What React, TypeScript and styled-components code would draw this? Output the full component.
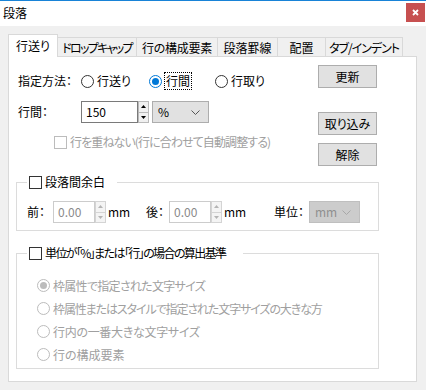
import React from 'react';
import styled, { createGlobalStyle } from 'styled-components';

const GlobalStyle = createGlobalStyle`
  html, body {
    margin: 0;
    padding: 0;
    background: #f0f0f0;
  }
  body {
    font-family: "Noto Sans CJK JP", "Noto Sans", sans-serif;
    font-size: 12px;
    line-height: 16px;
    color: #000;
    font-feature-settings: "palt";
  }
  * { box-sizing: border-box; }
`;

const Window = styled.div`
  width: 426px;
  height: 390px;
  background: #f0f0f0;
  overflow: hidden;
  display: flex;
  flex-direction: column;
`;

const TitleBar = styled.div`
  height: 26px;
  border-top: 1px solid #1883d7;
  background: #fff;
  display: flex;
  justify-content: space-between;
  padding-left: 3px;
  padding-right: 1px;
`;

const Title = styled.span`
  line-height: 24px;
  font-size: 12px;
`;

const CloseButton = styled.div`
  width: 19px;
  height: 19px;
  margin-top: 2px;
  background: #c75050;
  display: flex;
  align-items: center;
  justify-content: center;
`;

const Body = styled.div`
  padding: 8px 0 0 8px;
`;

const TabStrip = styled.div`
  display: flex;
  align-items: flex-end;
  height: 23px;
  margin-bottom: -1px;
  position: relative;
  z-index: 1;
`;

const Tab = styled.div<{ $active?: boolean; $w: number; $ls: number }>`
  width: ${p => p.$w}px;
  height: ${p => (p.$active ? 23 : 19)}px;
  margin-bottom: ${p => (p.$active ? 0 : 1)}px;
  background: ${p => (p.$active ? '#fff' : '#f0f0f0')};
  border: 1px solid #d9d9d9;
  border-bottom: none;
  border-left: ${p => (p.$active ? '1px solid #d9d9d9' : 'none')};
  display: flex;
  align-items: center;
  justify-content: center;
  padding-top: ${p => (p.$active ? 0 : 1)}px;
  white-space: nowrap;
  letter-spacing: ${p => p.$ls}px;
`;

const Panel = styled.div`
  width: 409px;
  height: 326px;
  background: #fff;
  border: 1px solid #d9d9d9;
`;

const TopArea = styled.div`
  display: flex;
  height: 117px;
  padding-left: 9px;
`;

const LeftCol = styled.div`
  flex: 1;
  padding-top: 16px;
`;

const RightCol = styled.div`
  width: 59px;
  margin-right: 39px;
  padding-top: 8px;
  display: flex;
  flex-direction: column;
`;

const FormRow = styled.div<{ $top?: number; $h?: number }>`
  display: flex;
  align-items: center;
  height: ${p => p.$h ?? 16}px;
  margin-top: ${p => p.$top ?? 0}px;
`;

const Label = styled.span<{ $w: number; $muted?: boolean }>`
  width: ${p => p.$w}px;
  flex: none;
  white-space: nowrap;
  color: ${p => (p.$muted ? '#a0a0a0' : '#000')};
`;

const RadioOption = styled.label<{ $w?: number; $disabled?: boolean; $ls?: number }>`
  display: flex;
  align-items: center;
  width: ${p => (p.$w ? `${p.$w}px` : 'auto')};
  flex: none;
  white-space: nowrap;
  letter-spacing: ${p => p.$ls ?? 0}px;
  color: ${p => (p.$disabled ? '#a0a0a0' : '#000')};
`;

const RadioCircle = styled.span<{ $checked?: boolean; $disabled?: boolean }>`
  width: 13px;
  height: 13px;
  border-radius: 50%;
  flex: none;
  background: #fff;
  border: 1px solid
    ${p => (p.$disabled ? '#bcbcbc' : p.$checked ? '#0078d7' : '#333')};
  display: flex;
  align-items: center;
  justify-content: center;
  margin-right: 3px;
  &::after {
    content: '';
    display: ${p => (p.$checked ? 'block' : 'none')};
    width: 7px;
    height: 7px;
    border-radius: 50%;
    background: ${p => (p.$disabled ? '#bcbcbc' : '#0078d7')};
  }
`;

const FocusText = styled.span`
  outline: 1px dotted #000;
  padding: 0 1px;
  line-height: 16px;
`;

const CheckBox = styled.span<{ $disabled?: boolean }>`
  width: 13px;
  height: 13px;
  flex: none;
  background: #fff;
  border: 1px solid ${p => (p.$disabled ? '#bcbcbc' : '#333')};
  margin-right: 3px;
`;

const CheckRow = styled.label<{ $disabled?: boolean; $ls?: number }>`
  display: flex;
  align-items: center;
  height: 16px;
  white-space: nowrap;
  letter-spacing: ${p => p.$ls ?? 0}px;
  color: ${p => (p.$disabled ? '#a0a0a0' : '#000')};
`;

const Indent = styled.div<{ $left: number; $top: number }>`
  padding-left: ${p => p.$left}px;
  margin-top: ${p => p.$top}px;
`;

const TextBox = styled.div<{ $w: number; $disabled?: boolean }>`
  width: ${p => p.$w}px;
  height: 22px;
  flex: none;
  border: 1px solid ${p => (p.$disabled ? '#cccccc' : '#7a7a7a')};
  background: #fff;
  color: ${p => (p.$disabled ? '#8a8a8a' : '#000')};
  display: flex;
  align-items: center;
  padding-left: 4px;
`;

const Spinner = styled.div`
  width: 11px;
  height: 22px;
  flex: none;
  display: flex;
  flex-direction: column;
  margin-right: 2px;
`;

const SpinHalf = styled.div<{ $disabled?: boolean }>`
  flex: 1;
  border: 1px solid ${p => (p.$disabled ? '#d4d4d4' : '#b9b9b9')};
  background: ${p => (p.$disabled ? '#f4f4f4' : '#f0f0f0')};
  display: flex;
  align-items: center;
  justify-content: center;
  & + & {
    border-top: none;
  }
`;

const ComboBox = styled.div<{ $w: number; $disabled?: boolean }>`
  width: ${p => p.$w}px;
  height: 22px;
  flex: none;
  background: ${p => (p.$disabled ? '#cccccc' : '#e1e1e1')};
  border: 1px solid ${p => (p.$disabled ? '#bfbfbf' : '#adadad')};
  color: ${p => (p.$disabled ? '#8f8f8f' : '#000')};
  display: flex;
  align-items: center;
  justify-content: space-between;
  padding: 0 8px 0 5px;
  margin-left: 1px;
`;

const Button = styled.div<{ $top?: number }>`
  height: 23px;
  margin-top: ${p => p.$top ?? 0}px;
  background: #e1e1e1;
  border: 1px solid #adadad;
  display: flex;
  align-items: center;
  justify-content: center;
`;

const Group = styled.fieldset<{ $top?: number; $pt: number; $pb: number; $pl: number }>`
  width: 363px;
  margin: ${p => p.$top ?? 0}px 0 0 7px;
  border: 1px solid #dcdcdc;
  padding: ${p => p.$pt}px 0 ${p => p.$pb}px ${p => p.$pl}px;
  min-width: 0;
`;

// legend is laid out from the fieldset's padding edge, so pull it back to x=27
const Legend = styled.legend<{ $pr: number; $ml: number }>`
  margin-left: ${p => p.$ml}px;
  padding: 0 ${p => p.$pr}px 0 2px;
  height: 16px;
`;

const LegendInner = styled.span<{ $ls?: number }>`
  display: inline-flex;
  align-items: center;
  height: 16px;
  white-space: nowrap;
  letter-spacing: ${p => p.$ls ?? 0}px;
`;

const RadioList = styled.div`
  display: flex;
  flex-direction: column;
`;

const RadioRow = styled.div`
  height: 23px;
  display: flex;
  align-items: center;
`;

const Arrow = ({ up, color }: { up?: boolean; color: string }) => (
  <svg width="5" height="3" viewBox="0 0 5 3">
    <path d={up ? 'M0 3 L2.5 0 L5 3 Z' : 'M0 0 L2.5 3 L5 0 Z'} fill={color} />
  </svg>
);

const Chevron = ({ color }: { color: string }) => (
  <svg width="9" height="5" viewBox="0 0 9 5">
    <path d="M0.5 0.5 L4.5 4.5 L8.5 0.5" fill="none" stroke={color} strokeWidth="1" />
  </svg>
);

const Spin = ({ disabled }: { disabled?: boolean }) => (
  <Spinner>
    <SpinHalf $disabled={disabled}>
      <Arrow up color={disabled ? '#b4b4b4' : '#000'} />
    </SpinHalf>
    <SpinHalf $disabled={disabled}>
      <Arrow color={disabled ? '#b4b4b4' : '#000'} />
    </SpinHalf>
  </Spinner>
);

const tabs = [
  { label: '行送り', w: 50, ls: 0 },
  { label: 'ドロップキャップ', w: 79, ls: -1.7 },
  { label: '行の構成要素', w: 81, ls: -0.3 },
  { label: '段落罫線', w: 60, ls: 0 },
  { label: '配置', w: 48, ls: 0 },
  { label: 'タブ/インデント', w: 77, ls: -1 },
];

const basisOptions = [
  { label: '枠属性で指定された文字サイズ', ls: -0.7 },
  { label: '枠属性またはスタイルで指定された文字サイズの大きな方', ls: -1.1 },
  { label: '行内の一番大きな文字サイズ', ls: -0.3 },
  { label: '行の構成要素', ls: 0 },
];

export default function App() {
  return (
    <>
      <GlobalStyle />
      <Window>
        <TitleBar>
          <Title>段落</Title>
          <CloseButton>
            <svg width="7" height="7" viewBox="0 0 7 7">
              <path d="M1 1 L6 6 M6 1 L1 6" stroke="#fff" strokeWidth="1.8" />
            </svg>
          </CloseButton>
        </TitleBar>
        <Body>
          <TabStrip>
            {tabs.map((t, i) => (
              <Tab key={t.label} $w={t.w} $ls={t.ls} $active={i === 0}>
                {t.label}
              </Tab>
            ))}
          </TabStrip>
          <Panel>
            <TopArea>
              <LeftCol>
                <FormRow>
                  <Label $w={63}>指定方法：</Label>
                  <RadioOption $w={68}>
                    <RadioCircle />
                    行送り
                  </RadioOption>
                  <RadioOption $w={66}>
                    <RadioCircle $checked />
                    <FocusText>行間</FocusText>
                  </RadioOption>
                  <RadioOption>
                    <RadioCircle />
                    行取り
                  </RadioOption>
                </FormRow>
                <FormRow $top={12} $h={22}>
                  <Label $w={63}>行間：</Label>
                  <TextBox $w={57}>150</TextBox>
                  <Spin />
                  <ComboBox $w={57}>
                    %
                    <Chevron color="#555" />
                  </ComboBox>
                </FormRow>
                <Indent $left={36} $top={11}>
                  <CheckRow $disabled $ls={-0.9}>
                    <CheckBox $disabled />
                    行を重ねない(行に合わせて自動調整する)
                  </CheckRow>
                </Indent>
              </LeftCol>
              <RightCol>
                <Button>更新</Button>
                <Button $top={24}>取り込み</Button>
                <Button $top={8}>解除</Button>
              </RightCol>
            </TopArea>

            <Group $pt={11} $pb={7} $pl={10}>
              <Legend $pr={12} $ml={0}>
                <LegendInner>
                  <CheckBox />
                  段落間余白
                </LegendInner>
              </Legend>
              <FormRow $h={22}>
                <Label $w={26}>前：</Label>
                <TextBox $w={42} $disabled>0.00</TextBox>
                <Spin disabled />
                <Label $w={38}>mm</Label>
                <Label $w={23}>後：</Label>
                <TextBox $w={42} $disabled>0.00</TextBox>
                <Spin disabled />
                <Label $w={50}>mm</Label>
                <Label $w={34}>単位：</Label>
                <ComboBox $w={51} $disabled>
                  mm
                  <Chevron color="#a8a8a8" />
                </ComboBox>
              </FormRow>
            </Group>

            <Group $top={14} $pt={13} $pb={2} $pl={20}>
              <Legend $pr={18} $ml={-10}>
                <LegendInner $ls={-1.6}>
                  <CheckBox />
                  単位が「%」または「行」の場合の算出基準
                </LegendInner>
              </Legend>
              <RadioList>
                {basisOptions.map((o, i) => (
                  <RadioRow key={o.label}>
                    <RadioOption $disabled $ls={o.ls}>
                      <RadioCircle $disabled $checked={i === 0} />
                      {o.label}
                    </RadioOption>
                  </RadioRow>
                ))}
              </RadioList>
            </Group>
          </Panel>
        </Body>
      </Window>
    </>
  );
}
